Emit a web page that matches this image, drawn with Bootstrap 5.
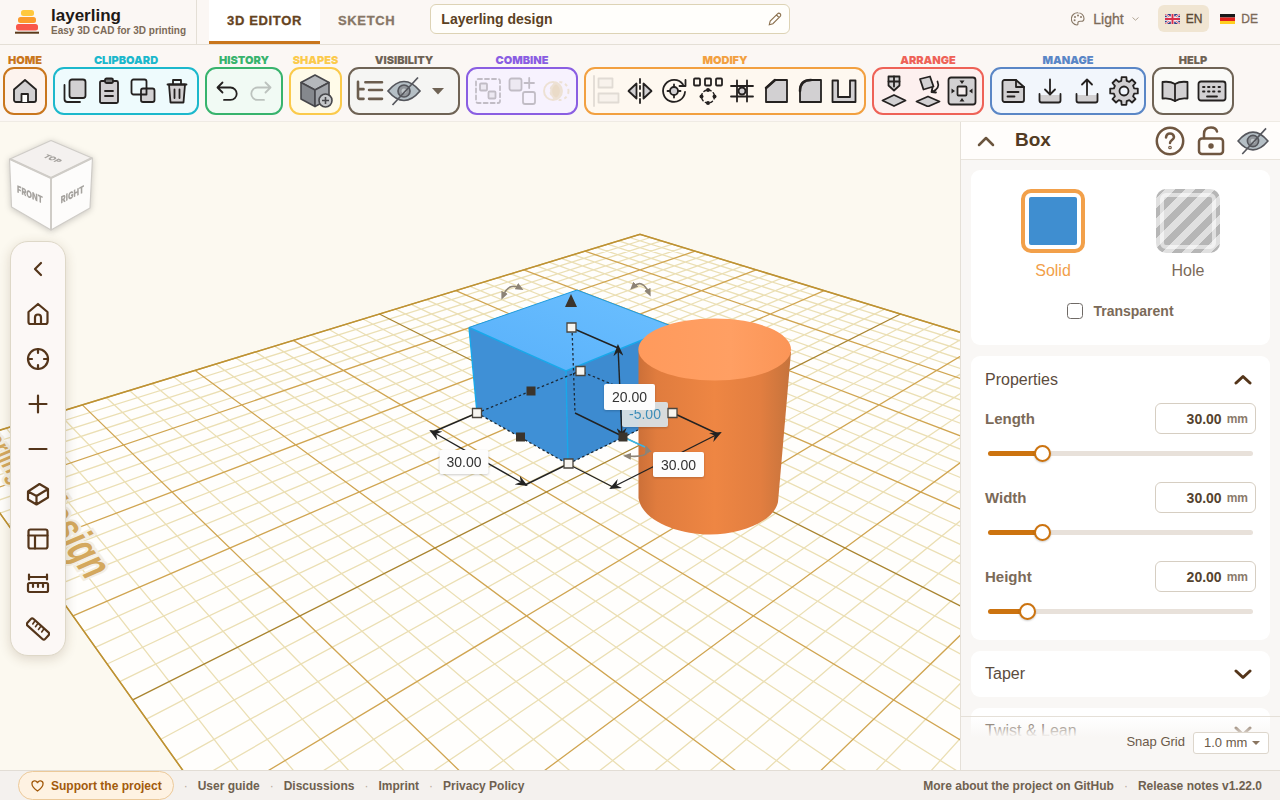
<!DOCTYPE html>
<html lang="en">
<head>
<meta charset="utf-8">
<meta name="viewport" content="width=device-width, initial-scale=1">
<title>Layerling design – layerling</title>
<link rel="stylesheet" href="https://cdn.jsdelivr.net/npm/bootstrap@5.3.0/dist/css/bootstrap.min.css">
<style>
  :root { --accent:#cc730f; --ink:#55402a; --soft:#7b6a58; --line:#e4dfd6; --bar:#fbf7f4; }
  body { font-family:"Liberation Sans", Arial, sans-serif; color:var(--ink); background:var(--bar); font-size:14px; line-height:20px; }
  button { font-family:inherit; }
  svg { display:block; flex:none; }
  a { text-decoration:none; color:inherit; }

  .topbar { height:45px; border-bottom:1px solid var(--line); }
  .brand-box { width:197px; border-right:1px solid var(--line); padding-left:15px; gap:12px; }
  .brand-name { font-size:17px; line-height:17px; font-weight:700; color:#1e1a16; }
  .brand-sub { font-size:10px; line-height:13px; font-weight:700; color:var(--soft); white-space:nowrap; }
  .mode-tabs { margin-left:12px; }
  .mode-tabs a { display:flex; align-items:center; padding:0 18px; font-size:13px; font-weight:800; letter-spacing:.05em; color:#877666; border-bottom:3px solid transparent; -webkit-text-stroke:.3px; }
  .mode-tabs a.active { color:#654321; background:#fff; border-color:#c9761d; }
  .name-field { width:360px; height:30px; margin:4px 0 0 17px; background:#fffefb; border:1px solid #ddd3b5; border-radius:6px; padding:0 7px 0 10px; }
  .name-field input { border:0; background:none; outline:0; min-width:0; font-size:14px; font-weight:700; color:#5b4123; padding:0; }
  .top-right { padding:5px 15px 0 0; height:32px; }
  .top-right button { border:0; background:none; color:var(--soft); font-size:14px; height:27px; padding:0 7px; border-radius:6px; -webkit-text-stroke:.3px; }
  .top-right .theme { margin-right:12px; }
  .top-right .lang { gap:6px; font-size:12px; }
  .top-right button.active { background:#f0e5d2; color:#5a4833; }

  .ribbon { height:77px; padding:7px 3px 0; gap:6px; border-bottom:1px solid #efebe4; }
  .tool-group { --c:#6f6355; --b:#f7f6f4; text-align:center; }
  .tool-group h2 { margin:0; height:15px; font:900 11px/16px Inter, sans-serif; color:var(--c); }
  .tool-set { display:flex; height:48px; border:2px solid var(--c); border-radius:11px; padding:0 3px; background:var(--b); }
  .tool-set button { width:34px; padding:0; border:0; background:none; display:flex; align-items:center; justify-content:center; }
  .tool-set button:disabled { opacity:.25; }
  .tool-set.roomy { padding:0 2px; }
  .tool-set.roomy button { width:37px; }
  .ic { fill:none; stroke:#242120; stroke-width:1.8; stroke-linecap:round; stroke-linejoin:round; }
  .ic .g { fill:#d2d0d2; }
  .ic .k { fill:#242120; stroke:none; }

  .stage { min-height:0; background:#fcf9f0; }
  .scene { position:absolute; inset:0; width:100%; height:100%; }
  .viewcube { position:absolute; left:5px; top:15px; filter:drop-shadow(0 1px 3px #0003); }
  .palette { position:absolute; left:10px; top:119px; width:56px; padding:4px; border-radius:18px; background:#fcf8f6; border:1px solid #ded8c8; box-shadow:0 3px 12px #5a402030; }
  .palette button { height:45px; width:100%; border:0; background:none; padding:0; display:flex; align-items:center; justify-content:center; }
  .palette svg, .chev { fill:none; stroke:#54351a; stroke-width:2.2; stroke-linecap:round; stroke-linejoin:round; }

  .inspector { width:320px; background:#f9f7f5; border-left:1px solid #e5e0d8; position:relative; overflow:hidden; }
  .inspector-head { height:38px; background:#fffdfb; border-bottom:1px solid #e9e4dc; padding:0 11px 0 15px; flex:none; }
  .inspector-head h1 { font-size:19px; font-weight:700; margin:0 0 0 19px; color:#523b23; }
  .bare { border:0; background:none; padding:0; display:flex; }
  .box { background:#fff; border-radius:9px; }
  .kind { border:0; background:none; padding:0; width:135px; font-size:16px; line-height:20px; color:var(--soft); display:flex; flex-direction:column; align-items:center; gap:8px; }
  .kind.active { color:#f2a04a; }
  .chip { width:64px; height:64px; border-radius:10px; }
  .chip-solid { border:4px solid #f2a04a; padding:4px; }
  .chip-solid i { display:block; height:100%; background:#3f8ed0; border-radius:2px; }
  .chip-hole { background:repeating-linear-gradient(135deg,#b6b6b6 0 7px,#e0e0e0 7px 14px); position:relative; }
  .chip-hole::after { content:""; position:absolute; inset:4px; border:4px solid #ffffff90; border-radius:6px; }
  .check-row { font-weight:700; color:var(--soft); gap:10px; font-size:14px; }
  .check-row input { width:16px; height:16px; margin:0; border:1px solid #6f6a66; border-radius:3px; }
  .box-title { font-size:16px; line-height:24px; color:#5c4c3d; }
  .prop-row { height:31px; margin-bottom:11px; }
  .prop-row label { font-size:15px; font-weight:700; color:var(--soft); }
  .prop-row .num { width:101px; height:31px; border:1px solid #d6cec2; border-radius:6px; padding:1px 7px 0; gap:5px; }
  .num input { border:0; outline:0; width:60px; text-align:right; padding:0; font-size:14px; font-weight:700; color:#55432f; background:none; }
  .num span { font-size:12px; font-weight:700; color:#8a7a6a; }
  .slide { appearance:none; display:block; width:265px; height:16px; margin:0 0 21px 3px; background:none; }
  .slide::-webkit-slider-runnable-track { height:5px; border-radius:3px; background:linear-gradient(90deg,var(--accent) var(--at),#e8e1da var(--at)); }
  .slide::-webkit-slider-thumb { appearance:none; width:17px; height:17px; margin-top:-6px; border-radius:50%; background:#fff; border:2px solid var(--accent); box-shadow:0 1px 2px #0003; }
  .snap { position:absolute; left:0; right:0; bottom:0; height:54px; border-top:1px solid #e5e0d8; background:linear-gradient(#f9f7f500,#f9f7f5 20px); padding:15px 11px 0 0; gap:8px; font-size:12px; color:#6b5a49; }
  .snap label { font-size:13px; }
  .snap select { appearance:none; width:76px; height:22px; font-size:13px; color:#6b5a49; padding:0 0 0 10px; border:1px solid #ddd6cc; border-radius:3px; background:#fff url("data:image/svg+xml,%3Csvg xmlns='http://www.w3.org/2000/svg' width='8' height='5'%3E%3Cpath d='M0 0h8L4 4z' fill='%238a7560'/%3E%3C/svg%3E") no-repeat right 8px center; }

  .foot { height:30px; border-top:1px solid #e2ddd5; background:#f4f1ee; font-size:12px; font-weight:700; color:#6f6150; padding:0 18px; }
  .foot .dot { width:24px; text-align:center; color:#b9ab9b; font-weight:400; }
  .support { height:29px; border:1px solid #ecc999; border-radius:15px; background:#fef2e2; color:#a25a0c; padding:0 11px 0 12px; gap:7px; }
</style>
</head>
<body class="vh-100 d-flex flex-column overflow-hidden">

<header class="topbar d-flex align-items-stretch flex-shrink-0">
  <div class="brand-box d-flex align-items-center">
    <svg width="24" height="25" viewBox="0 0 24 25"><rect x="6" y="0" width="13" height="6" rx="2.500" fill="#ffc83d"/><rect x="3" y="7" width="18" height="6" rx="2.500" fill="#fb9b2c"/><rect x="1" y="14" width="22" height="6.500" rx="2.500" fill="#f9564a"/><path d="M0 22.700h24" stroke="#5a3a1a" stroke-width="2"/></svg>
    <div><div class="brand-name">layerling</div><div class="brand-sub">Easy 3D CAD for 3D printing</div></div>
  </div>
  <nav class="mode-tabs d-flex"><a href="#" class="active">3D EDITOR</a><a href="#">SKETCH</a></nav>
  <div class="name-field d-flex align-items-center">
    <input class="flex-fill" type="text" value="Layerling design" aria-label="Design name">
    <svg width="14" height="14" viewBox="0 0 14 14" fill="none" stroke="#8a6f4c" stroke-width="1.100"><path d="M1.300 12.700l.9-3.600 7.300-7.300a1.600 1.600 0 012.700 2.600l-7.300 7.300zM8.500 3l2.600 2.600"/></svg>
  </div>
  <div class="top-right ms-auto d-flex align-items-center">
    <button class="theme d-flex align-items-center gap-2">
      <svg width="14" height="14" viewBox="0 0 14 14" fill="none" stroke="#8a7a68" stroke-width="1.100"><path d="M7 .8a6 6 0 00-1 12.200c1.500 0 .6-1.800 1-2.800.5-1.200 2-.8 3.600-.9 1.700 0 2.400-1.300 2.400-2.800C13 3 10.200.8 7 .8z"/><g fill="#8a7a68" stroke="none"><circle cx="4" cy="5" r="1"/><circle cx="7" cy="3.500" r="1"/><circle cx="10" cy="5" r="1"/><circle cx="3.600" cy="8.300" r="1"/></g></svg>
      Light
      <svg width="7" height="4" viewBox="0 0 7 4" fill="none" stroke="#b0a494"><path d="M.5.5l3 2.700 3-2.700"/></svg>
    </button>
    <button class="lang active d-flex align-items-center"><svg width="15" height="10" viewBox="0 0 15 10"><rect width="15" height="10" rx="1" fill="#2d3f86"/><path d="M0 0l15 10M15 0L0 10" stroke="#fff" stroke-width="2"/><path d="M0 0l15 10M15 0L0 10" stroke="#d8304a" stroke-width=".8"/><path d="M7.500 0v10M0 5h15" stroke="#fff" stroke-width="3.400"/><path d="M7.500 0v10M0 5h15" stroke="#d8304a" stroke-width="2"/></svg>EN</button>
    <button class="lang d-flex align-items-center ms-1"><svg width="15" height="10" viewBox="0 0 15 10"><path d="M0 0h15v3.500H0z" fill="#181818"/><path d="M0 3.500h15V7H0z" fill="#e0201c"/><path d="M0 7h15v3H0z" fill="#ffcf20"/></svg>DE</button>
  </div>
</header>

<div class="ribbon d-flex flex-shrink-0">
  <section class="tool-group" style="--c:#c9761d;--b:#fdf3ee"><h2>HOME</h2><div class="tool-set">
    <button aria-label="Home"><svg class="ic" width="26" height="26" viewBox="0 0 26 26"><path class="g" d="M2 11.500L13 2l11 9.500V22a2 2 0 01-2 2H4a2 2 0 01-2-2z"/><path d="M9.500 24v-8h6.500v8" fill="#fff"/></svg></button>
  </div></section>
  <section class="tool-group" style="--c:#1cb8cc;--b:#eefbfd"><h2>CLIPBOARD</h2><div class="tool-set">
    <button aria-label="Copy"><svg class="ic" width="26" height="26" viewBox="0 0 26 26"><rect class="g" x="7.500" y="1.500" width="16" height="18.500" rx="2.500"/><path d="M2.500 7v14a3 3 0 003 3H18"/></svg></button>
    <button aria-label="Paste"><svg class="ic" width="26" height="28" viewBox="0 0 26 28"><rect class="g" x="4" y="4" width="18" height="22" rx="1.500"/><rect x="9" y="1.500" width="8" height="4.500" rx="1.500" fill="#777"/><path d="M9 14h8M9 19h8"/></svg></button>
    <button aria-label="Duplicate"><svg class="ic" width="26" height="26" viewBox="0 0 26 26"><rect x="1.500" y="1.500" width="15" height="15" rx="2"/><rect class="g" x="11" y="10.500" width="13.500" height="13.500" rx="2"/><path d="M16.500 10.500v6H11"/></svg></button>
    <button aria-label="Delete"><svg class="ic" width="26" height="28" viewBox="0 0 26 28"><path class="g" d="M5 7.500h16l-1.500 18h-13z"/><path d="M3.500 7.500h19M9 7V3h8v4M10.500 12.500v8.500M15.500 12.500v8.500"/></svg></button>
  </div></section>
  <section class="tool-group" style="--c:#38b36d;--b:#f1faf4"><h2>HISTORY</h2><div class="tool-set">
    <button aria-label="Undo"><svg class="ic" width="24" height="22" viewBox="0 0 24 20"><path d="M7.500 1.500l-5 5 5 5M3 6.500h12.500a6.200 6.200 0 010 12.400H9"/></svg></button>
    <button aria-label="Redo" disabled><svg class="ic" width="24" height="22" viewBox="0 0 24 20"><path d="M16.500 1.500l5 5-5 5M21 6.500H8.500a6.200 6.200 0 000 12.400H15"/></svg></button>
  </div></section>
  <section class="tool-group" style="--c:#fbca4b;--b:#fffbe9"><h2>SHAPES</h2><div class="tool-set">
    <button aria-label="Add shape" style="width:43px"><svg width="36" height="36" viewBox="0 0 36 36" stroke="#47474b" stroke-width="1.600" stroke-linejoin="round"><path d="M3 9.500L17 2l14 7.500L17 17z" fill="#b4b7bb"/><path d="M3 9.500L17 17v16.500L3 26z" fill="#85888d"/><path d="M31 9.500L17 17v16.500L31 26z" fill="#a1a4a9"/><circle cx="27.500" cy="27.500" r="6.500" fill="#c6c8cb"/><path d="M27.500 24v7M24 27.500h7"/></svg></button>
  </div></section>
  <section class="tool-group" style="--c:#6f6355;--b:#f5f5f3"><h2>VISIBILITY</h2><div class="tool-set">
    <button aria-label="Object tree"><svg width="30" height="24" viewBox="0 0 30 26" fill="none" stroke="#6b5d4e" stroke-width="2.800" stroke-linecap="round"><path d="M2 3v16.500a2 2 0 002 2h4M2 11h6M10 3.500h18M14 12h14M14 21.500h14"/></svg></button>
    <button aria-label="Hide"><svg width="34" height="30" viewBox="0 0 34 30" stroke="#55565c" stroke-width="1.700"><path d="M1 15Q9 5.500 17 5.500T33 15Q25 24.500 17 24.500T1 15z" fill="#b5bfc5"/><circle cx="17" cy="15" r="6" fill="#92969b"/><circle cx="17" cy="15" r="2.500" fill="#c0c6c9" stroke="none"/><path d="M5.500 29L31 1.500"/></svg></button>
    <button aria-label="Visibility options"><svg width="12" height="8" viewBox="0 0 12 8"><path d="M0 1h12L6 7.500z" fill="#6f6355"/></svg></button>
  </div></section>
  <section class="tool-group" style="--c:#8a5ee2;--b:#f7f2fe"><h2>COMBINE</h2><div class="tool-set">
    <button aria-label="Group" disabled><svg class="ic" width="28" height="28" viewBox="0 0 28 28"><rect x="2" y="2" width="24" height="24" rx="2" stroke-dasharray="4 3"/><rect class="g" x="6" y="6.500" width="7" height="7" rx="1"/><rect class="g" x="14.500" y="14.500" width="7" height="7" rx="1"/></svg></button>
    <button aria-label="Ungroup" disabled><svg class="ic" width="28" height="28" viewBox="0 0 28 28"><rect class="g" x="1.500" y="1.500" width="12" height="12" rx="2"/><rect x="15" y="15" width="12" height="12" rx="2"/><path d="M16.500 6h9.500M21.200 1v10"/></svg></button>
    <button aria-label="Intersect" disabled><svg width="28" height="24" viewBox="0 0 28 24" stroke="#d3b25c" stroke-width="2"><circle cx="11" cy="12" r="9" fill="none"/><circle cx="17.500" cy="12" r="9" fill="none" stroke-dasharray="3 3"/><path d="M14 4a9 9 0 010 16 9 9 0 010-16z" fill="#c79b2c"/></svg></button>
  </div></section>
  <section class="tool-group" style="--c:#f2a040;--b:#fef8f0"><h2>MODIFY</h2><div class="tool-set">
    <button aria-label="Align" disabled style="opacity:.13"><svg class="ic" width="30" height="32" viewBox="0 0 30 32"><path d="M3 1v30"/><rect class="g" x="7.500" y="3.500" width="14" height="9"/><rect class="g" x="7.500" y="18.500" width="20" height="9"/></svg></button>
    <button aria-label="Mirror"><svg class="ic" width="26" height="26" viewBox="0 0 26 26"><path class="g" d="M9.500 5.500v15L1.500 13zM16.500 5.500v15l8-7.500z"/><path d="M13 1v4M13 8v3M13 15v3M13 21v4"/></svg></button>
    <button aria-label="Rotate"><svg class="ic" width="28" height="28" viewBox="0 0 28 28"><path d="M25 15A11 11 0 1123 7.500M25.500 3v6h-6"/><circle class="g" cx="14" cy="14" r="4"/><path d="M14 7.500V10M14 18v2.500M7.500 14H10M18 14h2.500"/></svg></button>
    <button aria-label="Pattern"><svg class="ic" width="30" height="28" viewBox="0 0 30 28"><rect x="1" y="1.500" width="6" height="7" rx="1"/><rect x="12" y="1.500" width="6" height="7" rx="1"/><rect x="23" y="1.500" width="6" height="7" rx="1"/><circle cx="15" cy="19.500" r="6.500" stroke-width="1.400" stroke-dasharray="2.500 2.600"/><g class="k"><circle cx="15" cy="13" r="2"/><circle cx="8.500" cy="19.500" r="2"/><circle cx="21.500" cy="19.500" r="2"/><circle cx="15" cy="26" r="2"/></g></svg></button>
    <button aria-label="Snap grid"><svg class="ic" width="26" height="26" viewBox="0 0 26 26"><path d="M2 8h22M2 18.500h22M8 2.500v21M18 2.500v21"/><circle cx="13" cy="13" r="3.500" fill="#d2d0d2" stroke-width="2"/></svg></button>
    <button aria-label="Chamfer"><svg class="ic" width="26" height="28" viewBox="0 0 26 28"><path class="g" d="M3 25V11l9-8h12v22z"/><path d="M3 11l9-8" stroke-width="2.500"/></svg></button>
    <button aria-label="Fillet"><svg class="ic" width="26" height="28" viewBox="0 0 26 28"><path class="g" d="M3 25V14Q3 3 14 3h10v22z"/><path d="M3 14Q3 3 14 3" stroke-width="2.500"/></svg></button>
    <button aria-label="Shell"><svg class="ic" width="28" height="28" viewBox="0 0 28 28"><path class="g" d="M2.500 3.500h5.500v16.500h12V3.500h5.500V25h-23z"/></svg></button>
  </div></section>
  <section class="tool-group" style="--c:#ee6257;--b:#fdf0ef"><h2>ARRANGE</h2><div class="tool-set">
    <button aria-label="Drop to plate"><svg class="ic" width="28" height="32" viewBox="0 0 28 32"><path class="g" d="M2.500 25.500L14 20l11.500 5.500L14 31z"/><path class="g" d="M8.500 1.500h11v9l-5.500 5-5.500-5z"/><path d="M14 1.500v10M8.500 6.500h11"/></svg></button>
    <button aria-label="Lay on face"><svg class="ic" width="28" height="32" viewBox="0 0 28 32"><path class="g" d="M2.500 26.500L14 21.500l11.500 5L14 31.500z"/><path class="g" d="M6 4l10-2.500 3.500 10-10 3z"/><path d="M23.500 6.500q3 7-5.500 10.500M18.500 12.500L17.500 17l4.500.5"/></svg></button>
    <button aria-label="Center"><svg class="ic" width="30" height="30" viewBox="0 0 30 30"><rect class="g" x="1.500" y="1.500" width="27" height="27" rx="2.500"/><rect x="10.500" y="10.500" width="9" height="9" rx="1" fill="#f5eded"/><path class="k" d="M12.500 4.500h5L15 8zM12.500 25.500h5L15 22zM4.500 12.500v5L8 15zM25.500 12.500v5L22 15z"/></svg></button>
  </div></section>
  <section class="tool-group" style="--c:#5a86c6;--b:#f2f6fc"><h2>MANAGE</h2><div class="tool-set roomy">
    <button aria-label="Notes"><svg class="ic" width="26" height="26" viewBox="0 0 26 26"><path class="g" d="M2.500 4a2 2 0 012-2H16l8 7v13a2 2 0 01-2 2H4.500a2 2 0 01-2-2z"/><path d="M16 2v7h8M7.500 14h11M7.500 18.500h7"/></svg></button>
    <button aria-label="Import"><svg class="ic" width="26" height="26" viewBox="0 0 26 26"><path class="g" d="M2.500 17v5.500a2 2 0 002 2h17a2 2 0 002-2V17" stroke="none"/><path d="M2.500 16v6.500a2 2 0 002 2h17a2 2 0 002-2V16M13 1.500V16M8 11.500l5 5 5-5"/></svg></button>
    <button aria-label="Export"><svg class="ic" width="26" height="26" viewBox="0 0 26 26"><path class="g" d="M2.500 17v5.500a2 2 0 002 2h17a2 2 0 002-2V17" stroke="none"/><path d="M2.500 16v6.500a2 2 0 002 2h17a2 2 0 002-2V16M13 17V1.500M8 6.500l5-5 5 5"/></svg></button>
    <button aria-label="Settings"><svg class="ic" width="30" height="30" viewBox="0 0 30 30"><path class="g" id="gear"/><circle cx="15" cy="15" r="4.500" fill="#f2f6fc"/></svg></button>
  </div></section>
  <section class="tool-group" style="--c:#6f6355;--b:#fafaf8"><h2>HELP</h2><div class="tool-set roomy">
    <button aria-label="User guide"><svg class="ic" width="28" height="24" viewBox="0 0 28 24"><path class="g" d="M14 5Q9 2 1.500 3v16.500q7.500-1 12.500 2.500 5-3.500 12.500-2.500V3Q19 2 14 5z"/><path d="M14 5v17"/></svg></button>
    <button aria-label="Shortcuts"><svg class="ic" width="30" height="22" viewBox="0 0 30 22"><rect class="g" x="1.500" y="1.500" width="27" height="19" rx="2.500"/><path d="M6 7h1.500M11 7h1.500M16 7h1.500M21.500 7H23M6 11.500h1.500M11 11.500h1.500M16 11.500h1.500M21.500 11.500H23M10 16.500h10"/></svg></button>
  </div></section>
</div>

<main class="stage position-relative d-flex flex-fill overflow-hidden">
  <section class="position-relative flex-fill overflow-hidden" aria-label="3D view">
    <svg class="scene" viewBox="0 122 960 648" preserveAspectRatio="xMinYMin slice">
      <defs>
        <linearGradient id="top" x1="0" y1="1" x2="1" y2="0"><stop offset="0" stop-color="#58b0fa"/><stop offset="1" stop-color="#6cc0ff"/></linearGradient>
        <linearGradient id="cyl"><stop offset="0" stop-color="#cc7038"/><stop offset=".12" stop-color="#e07c3e"/><stop offset=".5" stop-color="#ee8643"/><stop offset=".8" stop-color="#e27e40"/><stop offset="1" stop-color="#c5733c"/></linearGradient>
        <linearGradient id="cap" x1="0" x2="1"><stop offset="0" stop-color="#ff9a5c"/><stop offset=".6" stop-color="#ff9f63"/><stop offset="1" stop-color="#fb9557"/></linearGradient>
        <marker id="tip" viewBox="0 0 12 10" refX="10" refY="5" markerWidth="12" markerHeight="10" markerUnits="userSpaceOnUse" orient="auto-start-reverse"><path d="M12 5L0 0l4 5-4 5z" fill="#222"/></marker>
        <marker id="gtip" viewBox="0 0 8 8" refX="4" refY="4" markerWidth="8" markerHeight="8" markerUnits="userSpaceOnUse" orient="auto-start-reverse"><path d="M8 4L0 .5v7z" fill="#8d8375"/></marker>
      </defs>
      <g id="plate" fill="none"></g>
      <g text-anchor="end" font-weight="700" fill="#cf9c45" fill-opacity=".85" stroke="#f4efe3" stroke-width="6" paint-order="stroke"><text transform="matrix(.37 .53 -.86 .36 15 485)" font-size="32">Layerling</text><text transform="matrix(.37 .53 -.88 .38 86 580)" font-size="48">design</text></g>

      <path d="M469 327.500L577 290l97 37-108 44z" fill="url(#top)"/>
      <path d="M469 327.500L566 371l2 93-91-51z" fill="#3f90d6"/>
      <path d="M566 371l108-44v86L568 464z" fill="#3d8bd0"/>
      <path d="M469 327.500L566 371l108-44M566 371l2 93M469 327.500l8 85.500" fill="none" stroke="#18a8ea" stroke-width="1.400"/>
      <path d="M469 327.500L577 290l97 37" fill="none" stroke="#1d9ce0"/>
      <path d="M638.500 350V498C642 521 678 534.500 710 534.500S774 521 778 502L791 352z" fill="url(#cyl)"/>
      <ellipse cx="714.700" cy="349.500" rx="76.300" ry="31" fill="url(#cap)"/>

      <g fill="none" stroke="#1c2a38" stroke-width="1.300" stroke-dasharray="2.500 2.500"><path d="M572 328l3 85M477 413l103-42 58 24M477 413l91 51 70-34"/></g>
      <g fill="none" stroke="#222" stroke-width="1.400">
        <path d="M477 413l-44 19M568 464l-43 21M568 464l45 23M673 413l45 21M572 328l46 20M575 413l47 23"/>
        <path d="M431 431l95 54" marker-start="url(#tip)" marker-end="url(#tip)"/>
        <path d="M611 488l109-55" marker-start="url(#tip)" marker-end="url(#tip)"/>
        <path d="M618 346l4 92" marker-start="url(#tip)" marker-end="url(#tip)"/>
      </g>
      <path d="M623 437l22 10" stroke="#35b5ea" stroke-width="1.400"/>
      <g fill="none" stroke="#8d8375" stroke-width="1.600"><path d="M503 296q6-14 17-8" marker-start="url(#gtip)" marker-end="url(#gtip)"/><path d="M633 287q9-9 16 6" marker-start="url(#gtip)" marker-end="url(#gtip)"/><path d="M627 456q23 2 20-7" marker-start="url(#gtip)" marker-end="url(#gtip)"/></g>
      <g fill="#f7f5f0" stroke="#4b463e" stroke-width="1.300"><path d="M567 323h9v9h-9zM576 366.500h9v9h-9zM472.500 408.500h9v9h-9zM564 459h9v9h-9z"/></g>
      <path d="M526.500 386.500h9v9h-9zM516 432.500h9v9h-9zM618.500 432.500h9v9h-9zM571 294l6 13h-12z" fill="#3b342c"/>
      <g font-size="14" text-anchor="middle" style="filter:drop-shadow(0 1px 1px #0003)">
        <rect x="622" y="402" width="46" height="25" rx="2" fill="#d9e2e6" fill-opacity=".95"/><text x="645" y="419" fill="#3c8db8">-5.00</text>
        <rect x="604" y="384" width="51" height="26" rx="2" fill="#fdfdfd"/><text x="629.500" y="402" fill="#333">20.00</text>
        <rect x="439.500" y="450" width="49" height="24" rx="2" fill="#fdfdfd"/><text x="464" y="467" fill="#333">30.00</text>
        <rect x="653" y="452" width="51" height="25" rx="2" fill="#fdfdfd"/><text x="678.500" y="470" fill="#333">30.00</text>
      </g>
      <path d="M668 408.500h9v9h-9z" fill="#f7f5f0" stroke="#4b463e" stroke-width="1.300"/>
    </svg>

    <svg class="viewcube" width="92" height="98" viewBox="5 137 92 98" stroke="#cfccc7" stroke-width="1.200" stroke-linejoin="round">
      <path d="M10 159l41-18.500L92 158 51 178z" fill="#f4f1ef"/><path d="M9.500 159L51 178v52L11.500 207z" fill="#fdfcfb"/><path d="M92.500 158L51 178v52l39-22z" fill="#fdfcfb"/><path d="M51 178v52M10 159l41 19 41-20" fill="none" stroke-width="2"/>
      <g stroke="none" fill="#a5a29e" font-family="Inter, sans-serif" font-weight="900" font-size="10" text-anchor="middle"><text transform="matrix(.75 .3 -.7 .4 50 160)">TOP</text><text transform="matrix(.74 .33 0 1 30 198)">FRONT</text><text transform="matrix(.74 -.36 0 1 72.500 198)">RIGHT</text></g>
    </svg>

    <div class="palette">
      <button aria-label="Collapse"><svg width="24" height="24" viewBox="0 0 24 24"><path d="M15 6l-6 6 6 6"/></svg></button>
      <button aria-label="Home view"><svg width="24" height="24" viewBox="0 0 24 24"><path d="M2.500 10L12 2l9.500 8v10a2 2 0 01-2 2h-15a2 2 0 01-2-2zM9 22v-6.500a3 3 0 016 0V22"/></svg></button>
      <button aria-label="Focus"><svg width="24" height="24" viewBox="0 0 24 24"><circle cx="12" cy="12" r="10"/><path d="M12 2v4M12 18v4M2 12h4M18 12h4"/></svg></button>
      <button aria-label="Zoom in"><svg width="24" height="24" viewBox="0 0 24 24"><path d="M12 3.500v17M3.500 12h17"/></svg></button>
      <button aria-label="Zoom out"><svg width="24" height="24" viewBox="0 0 24 24"><path d="M3.500 12h17"/></svg></button>
      <button aria-label="Perspective"><svg width="24" height="24" viewBox="0 0 24 24"><path d="M2 9.500L13.500 2 22 7v8.500L10.500 22.500 2 17.500zM2 9.500l8.500 4.500L22 7M10.500 14v8.500"/></svg></button>
      <button aria-label="Layout"><svg width="24" height="24" viewBox="0 0 24 24"><rect x="2.500" y="2.500" width="19" height="19" rx="2"/><path d="M2.500 8.500h19M9 8.500v13"/></svg></button>
      <button aria-label="Dimensions"><svg width="24" height="24" viewBox="0 0 24 24"><path d="M3 5h18M3 2.500v5M21 2.500v5M7 11v4M12 11v4M17 11v4"/><rect x="2" y="11" width="20" height="9" rx="1.500"/></svg></button>
      <button aria-label="Measure"><svg width="24" height="24" viewBox="0 0 24 24"><rect x="0" y="7.500" width="24" height="9" rx="2" transform="rotate(42 12 12)"/><path d="M8.500 4.500L6.800 7M11.500 7L9.500 9.700M14.500 9.800l-2 2.700M17.500 12.500l-1.800 2.500" stroke-width="1.600"/></svg></button>
    </div>
  </section>

  <aside class="inspector d-flex flex-column flex-shrink-0">
    <div class="inspector-head d-flex align-items-center">
      <button class="bare" aria-label="Collapse"><svg class="chev" width="20" height="14" viewBox="0 0 20 14" style="stroke-width:2.500;stroke:#6b553e"><path d="M3 11l7-7 7 7"/></svg></button>
      <h1>Box</h1>
      <div class="ms-auto d-flex align-items-center" style="gap:11px">
        <button class="bare" aria-label="Help"><svg width="30" height="30" viewBox="0 0 30 30" fill="none" stroke="#6f5640" stroke-width="2.500" stroke-linecap="round"><circle cx="15" cy="15" r="13.200"/><path d="M11 11.500q.5-4 4-4t4 3.500c0 3-4 3-4 6"/><circle cx="15" cy="21.500" r=".6"/></svg></button>
        <button class="bare" aria-label="Lock"><svg width="30" height="30" viewBox="0 0 30 30" fill="none" stroke="#6f5640" stroke-width="2.500" stroke-linecap="round"><rect x="3" y="12.500" width="24" height="15.500" rx="3"/><path d="M8 12V8q0-6.500 7-6.500 5 0 6 4"/><circle cx="15" cy="20" r="1.500" fill="#6f5640"/></svg></button>
        <button class="bare" aria-label="Hide"><svg width="32" height="28" viewBox="0 0 34 30" stroke="#55565c" stroke-width="1.700"><path d="M1 15Q9 5.500 17 5.500T33 15Q25 24.500 17 24.500T1 15z" fill="#b5bfc5"/><circle cx="17" cy="15" r="6" fill="#92969b"/><circle cx="17" cy="15" r="2.500" fill="#c0c6c9" stroke="none"/><path d="M5.500 29L31 1.500"/></svg></button>
      </div>
    </div>
    <div class="d-flex flex-column overflow-hidden flex-fill" style="gap:11px;padding:10px 10px 0">
      <section class="box flex-shrink-0" style="padding:19px 14px 24px">
        <div class="d-flex justify-content-center">
          <button class="kind active"><span class="chip chip-solid"><i></i></span>Solid</button>
          <button class="kind"><span class="chip chip-hole"></span>Hole</button>
        </div>
        <label class="check-row d-flex justify-content-center align-items-center mt-3 pt-1"><input class="form-check-input" type="checkbox">Transparent</label>
      </section>
      <section class="box flex-shrink-0" style="padding:12px 14px 0">
        <div class="box-title d-flex justify-content-between align-items-center" style="margin-bottom:11px">Properties
          <button class="bare me-1" aria-label="Collapse properties"><svg class="chev" width="18" height="12" viewBox="0 0 18 12" style="stroke-width:3"><path d="M2 9l7-6.500L16 9"/></svg></button></div>
        <div class="prop-row d-flex justify-content-between align-items-center"><label for="len">Length</label><div class="num d-flex align-items-center justify-content-end"><input id="len" value="30.00"><span>mm</span></div></div>
        <input class="slide" type="range" min="0" max="200" value="37" aria-label="Length" style="--at:20%">
        <div class="prop-row d-flex justify-content-between align-items-center"><label for="wid">Width</label><div class="num d-flex align-items-center justify-content-end"><input id="wid" value="30.00"><span>mm</span></div></div>
        <input class="slide" type="range" min="0" max="200" value="37" aria-label="Width" style="--at:20%">
        <div class="prop-row d-flex justify-content-between align-items-center"><label for="hei">Height</label><div class="num d-flex align-items-center justify-content-end"><input id="hei" value="20.00"><span>mm</span></div></div>
        <input class="slide" type="range" min="0" max="200" value="25" aria-label="Height" style="--at:15%">
      </section>
      <section class="box box-title flex-shrink-0 d-flex justify-content-between align-items-center" style="padding:11px 18px 11px 14px">Taper<svg class="chev" width="18" height="12" viewBox="0 0 18 12" style="stroke-width:3"><path d="M2 3l7 6.500L16 3"/></svg></section>
      <section class="box box-title flex-shrink-0 d-flex justify-content-between align-items-center" style="padding:11px 18px 11px 14px">Twist &amp; Lean<svg class="chev" width="18" height="12" viewBox="0 0 18 12" style="stroke-width:3"><path d="M2 3l7 6.500L16 3"/></svg></section>
    </div>
    <div class="snap d-flex justify-content-end align-items-start"><label for="snap">Snap Grid</label><select id="snap"><option>1.0 mm</option></select></div>
  </aside>
</main>

<footer class="foot d-flex align-items-center flex-shrink-0">
  <a href="#" class="support d-flex align-items-center"><svg width="13" height="12" viewBox="0 0 13 12" fill="none" stroke="#a25a0c" stroke-width="1.300"><path d="M6.500 11Q1 7 1 4a2.800 2.800 0 015.500-1A2.800 2.800 0 0112 4q0 3-5.500 7z"/></svg>Support the project</a>
  <span class="dot">·</span><a href="#">User guide</a><span class="dot">·</span><a href="#">Discussions</a><span class="dot">·</span><a href="#">Imprint</a><span class="dot">·</span><a href="#">Privacy Policy</a>
  <a href="#" class="ms-auto">More about the project on GitHub</a><span class="dot">·</span><a href="#">Release notes v1.22.0</a>
</footer>

<script src="https://cdn.jsdelivr.net/npm/bootstrap@5.3.0/dist/js/bootstrap.bundle.min.js"></script>
<script>
  // Perspective view of the build plate: 8 x 8 major cells, 5 minor steps each.
  const project = (u, v) => {
    const w = 1 - 0.0489 * (u + v);
    return [640 + 52.4 * (u - v) / w, (234.3 + 4.575 * (u + v)) / w].map(n => n.toFixed(1)).join(' ');
  };
  const seg = (a, b, c, d) => `M${project(a, b)}L${project(c, d)}`;
  let minor = '', major = '', axis = '';
  for (let i = 0; i <= 40; i++) {
    const t = i / 5, d = seg(t, 0, t, 8) + seg(0, t, 8, t);
    if (i === 20) axis += d; else if (i % 5 === 0) major += d; else minor += d;
  }
  document.getElementById('plate').innerHTML =
    `<path d="M${project(0,0)}L${project(8,0)}L${project(8,8)}L${project(0,8)}z" fill="#fffefc"/>` +
    `<path d="${minor}" stroke="#ebdfb4" stroke-width="1.3"/>` +
    `<path d="${major}" stroke="#d0a551" stroke-width="1.3"/>` +
    `<path d="${axis}" stroke="#a9842f" stroke-width="1.3"/>` +
    `<path d="M${project(8,0)}L${project(0,0)}L${project(0,8)}L${project(8,8)}" stroke="#bd9233" stroke-width="1.5"/>`;

  // Settings gear: eight square teeth.
  let g = [];
  for (let k = 0; k < 8; k++) for (const [o, r] of [[-15, 10.5], [-10, 14], [10, 14], [15, 10.5]]) {
    const a = (k * 45 + o) * Math.PI / 180;
    g.push((15 + r * Math.cos(a)).toFixed(1) + ' ' + (15 + r * Math.sin(a)).toFixed(1));
  }
  document.getElementById('gear').setAttribute('d', 'M' + g.join('L') + 'z');
</script>
</body>
</html>
